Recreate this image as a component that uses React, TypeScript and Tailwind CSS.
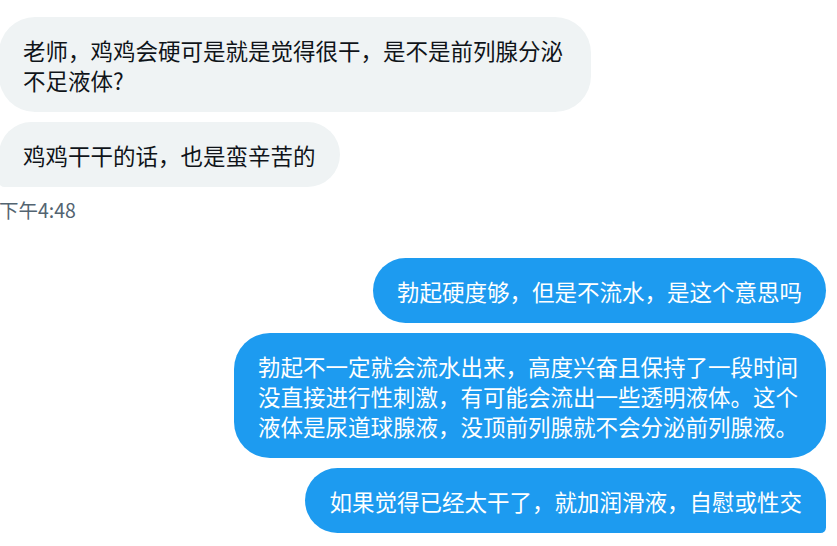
import React from "react";

const font = { fontFamily: '"Noto Sans CJK SC", "Noto Sans", sans-serif' };

function Lines({ lines }: { lines: string[] }) {
  return (
    <>
      {lines.map((l, i) => (
        <React.Fragment key={i}>
          {l}
          {i < lines.length - 1 && <br />}
        </React.Fragment>
      ))}
    </>
  );
}

export default function App() {
  return (
    <div
      className="w-[837px] h-[546px] bg-white overflow-hidden pt-[17px] pr-[11px]"
      style={font}
    >
      <div className="flex flex-col items-start gap-[10px] ml-[-1px]">
        <div className="w-[592px] bg-[#eff3f4] text-[#0f1419] text-[22.5px] leading-[30px] px-[24px] py-[17.5px] rounded-[36px] whitespace-nowrap">
          <Lines
            lines={[
              "老师，鸡鸡会硬可是就是觉得很干，是不是前列腺分泌",
              "不足液体?",
            ]}
          />
        </div>
        <div className="bg-[#eff3f4] text-[#0f1419] text-[22.5px] leading-[30px] px-[24px] py-[17.5px] rounded-[36px] rounded-bl-[6px] whitespace-nowrap">
          鸡鸡干干的话，也是蛮辛苦的
        </div>
      </div>
      <div className="mt-[11px] ml-[-1px] text-[19.5px] leading-[24px] text-[#536471]">
        下午4:48
      </div>
      <div className="mt-[36px] flex flex-col items-end gap-[10px]">
        <div className="bg-[#1d9bf0] text-white text-[22.5px] leading-[30px] px-[24px] py-[17.5px] rounded-[36px] whitespace-nowrap">
          勃起硬度够，但是不流水，是这个意思吗
        </div>
        <div className="w-[592px] bg-[#1d9bf0] text-white text-[22.5px] leading-[30px] px-[24px] py-[17.5px] rounded-[36px] whitespace-nowrap">
          <Lines
            lines={[
              "勃起不一定就会流水出来，高度兴奋且保持了一段时间",
              "没直接进行性刺激，有可能会流出一些透明液体。这个",
              "液体是尿道球腺液，没顶前列腺就不会分泌前列腺液。",
            ]}
          />
        </div>
        <div className="bg-[#1d9bf0] text-white text-[22.5px] leading-[30px] px-[24px] py-[17.5px] rounded-[36px] rounded-br-[6px] whitespace-nowrap">
          如果觉得已经太干了，就加润滑液，自慰或性交
        </div>
      </div>
    </div>
  );
}
